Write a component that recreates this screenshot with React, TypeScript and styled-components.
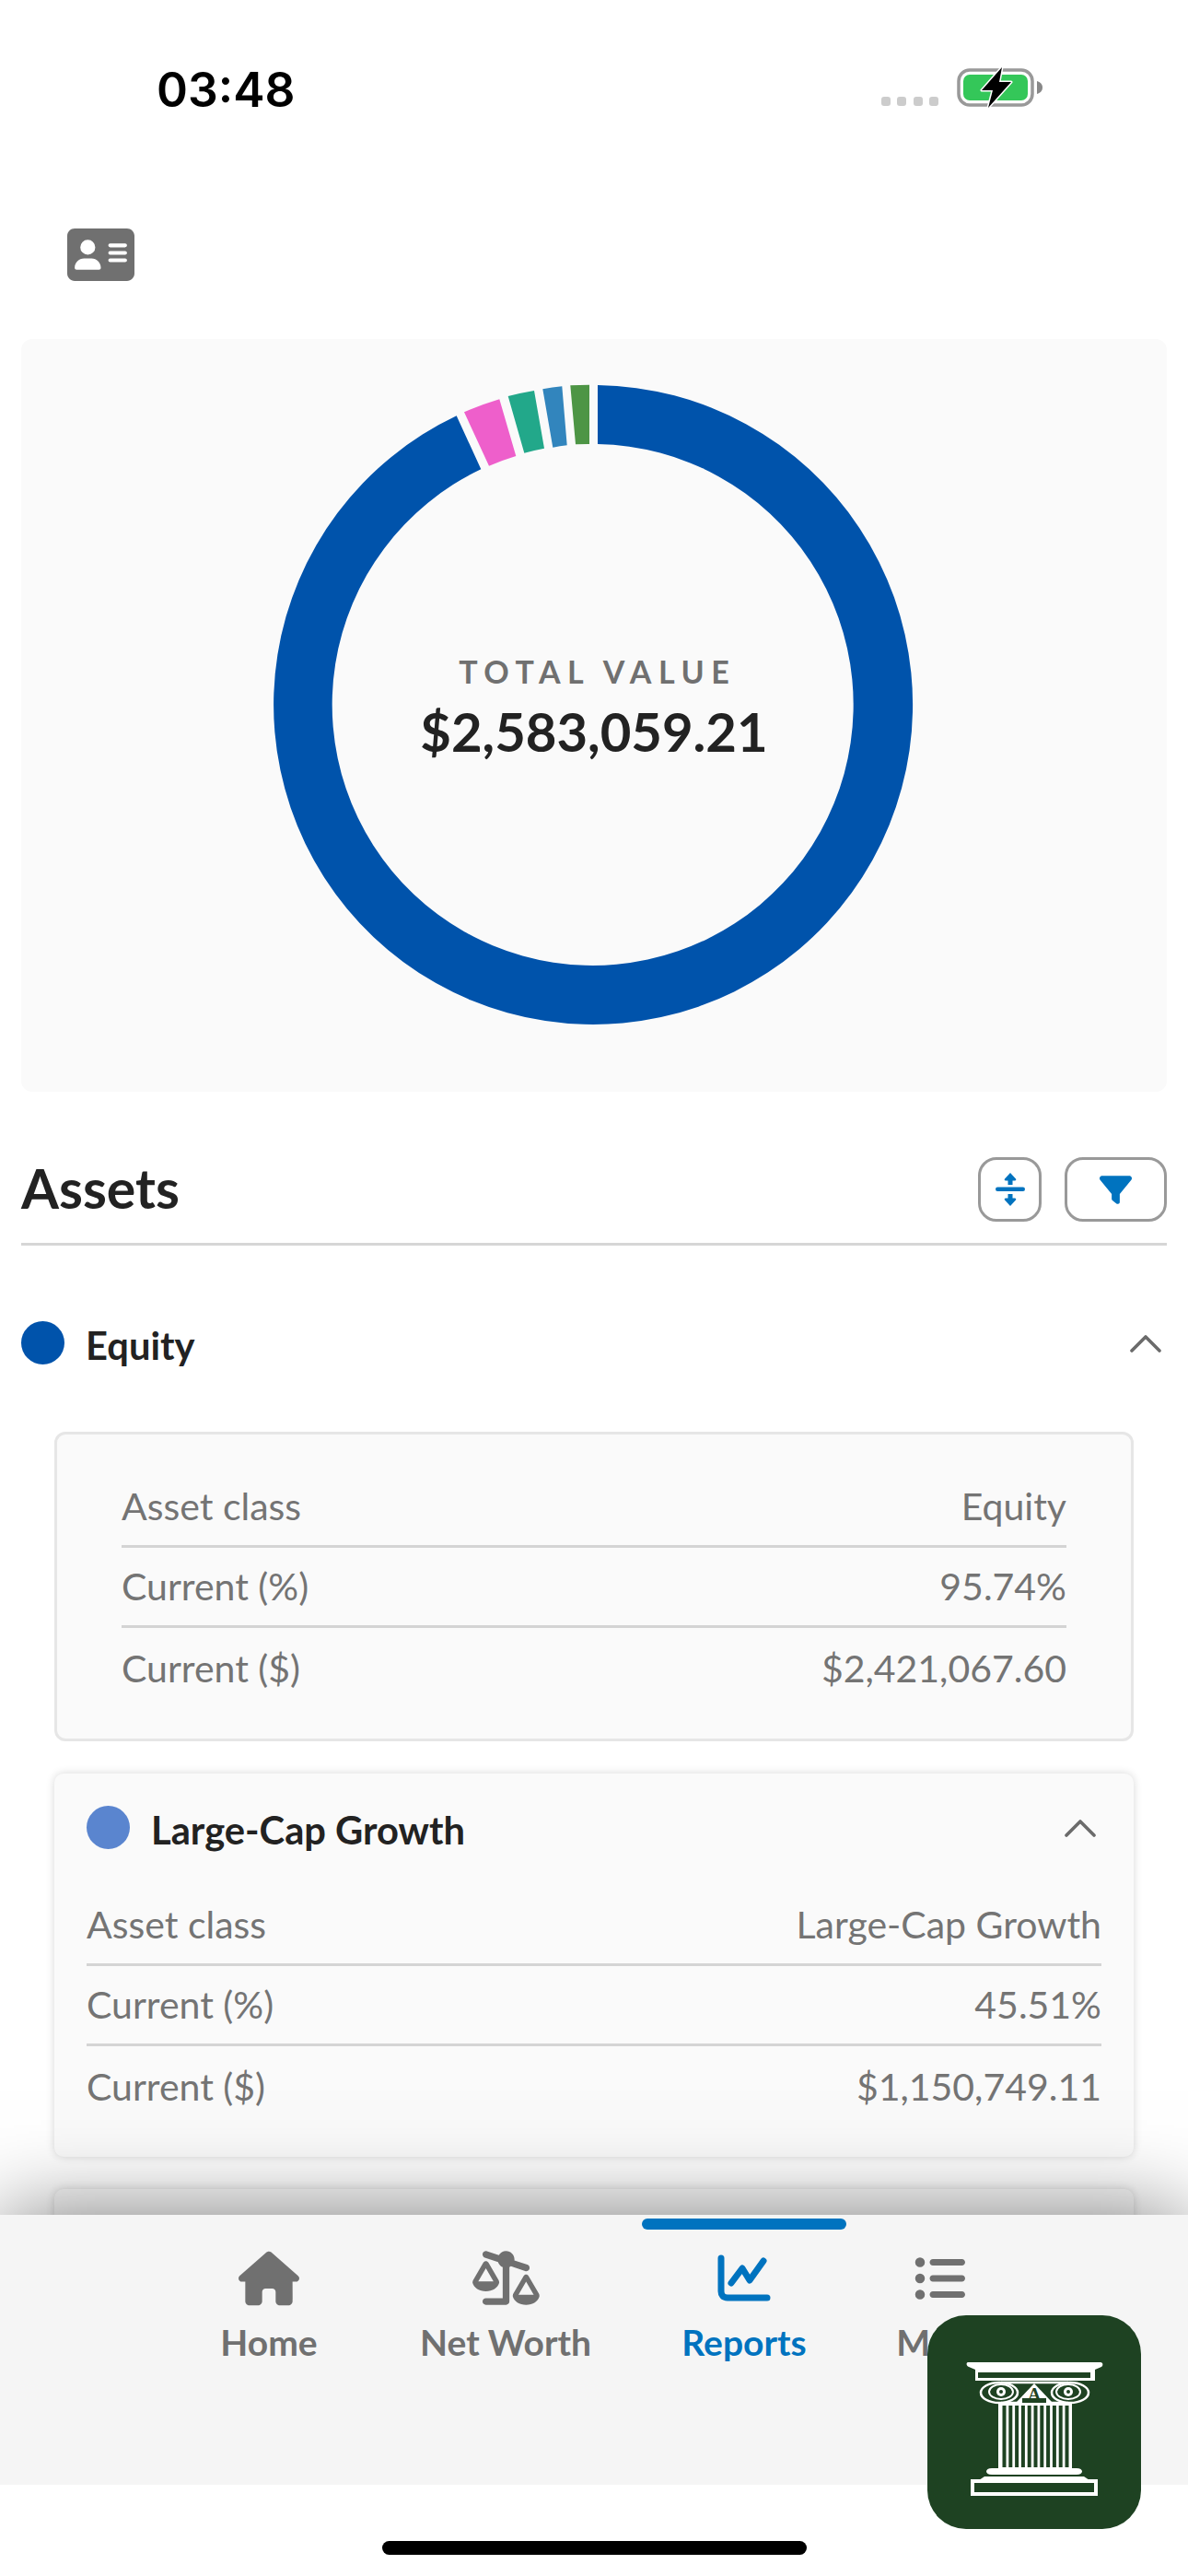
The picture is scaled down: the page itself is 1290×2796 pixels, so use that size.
import React from 'react';
import styled, { createGlobalStyle } from 'styled-components';
import { FaAddressCard, FaFilter, FaHouse, FaListUl, FaScaleUnbalancedFlip } from 'react-icons/fa6';

const GlobalStyle = createGlobalStyle`
    html, body {
        margin: 0;
        padding: 0;
        background: #fff;
    }
`;

const grey = '#707070';
const accent = '#0073bf';
const ink = '#222222';
const logoGreen = '#1e4222';

const flutes = [0, 1, 2, 3, 4, 5, 6, 7, 8, 9, 10];

const Battery = () => (
    <svg width="94" height="44" viewBox="0 0 94 44">
        <rect x="2" y="3" width="80" height="38" rx="12" fill="none" stroke="#999" strokeWidth="3.5" />
        <rect x="7" y="8" width="70" height="28" rx="7" fill="#34c759" />
        <path d="M87 15c3.500 1 6 3.500 6 7s-2.500 6-6 7z" fill="#888" />
        <path
            d="M49 0 27 25h12l-5 19 25-28H46z"
            fill="#000"
            stroke="#fff"
            strokeWidth="3"
            paintOrder="stroke"
            strokeLinejoin="round"
        />
    </svg>
);

const Donut = () => (
    <svg width="694" height="694" viewBox="298 417 694 694" overflow="visible">
        <path d="M649 418 A347 347 0 1 1 495.700 451.300 L522.300 509.300 A283 283 0 1 0 649 482 Z" fill="#0053ab" />
        <path d="M504 447.300 A347 347 0 0 1 542.300 433.300 L560.300 495 A283 283 0 0 0 531 505.700 Z" fill="#ee5fcb" />
        <path d="M551.700 430 A347 347 0 0 1 580 424 L591 486.700 A283 283 0 0 0 569.300 491.700 Z" fill="#22a88a" />
        <path d="M589.300 422.300 A347 347 0 0 1 610.300 419.300 L615.700 483.300 A283 283 0 0 0 600.300 485.700 Z" fill="#3285bd" />
        <path d="M619.300 418.300 A347 347 0 0 1 640 417.700 L640 482 A283 283 0 0 0 625 482.300 Z" fill="#4d9545" />
    </svg>
);

const Chevron = () => (
    <svg width="34" height="20" viewBox="0 0 34 20">
        <path d="M2 18 17 3l15 15" fill="none" stroke="#6b6b6b" strokeWidth="3.600" strokeLinecap="round" strokeLinejoin="round" />
    </svg>
);

const ExpandIcon = () => (
    <svg width="32" height="36" viewBox="0 0 32 36" fill={accent}>
        <rect x="0" y="15.500" width="32" height="4.500" rx="2.200" />
        <path d="M16 0l6 6.500c.7 1 .1 2-1 2h-2.500V13h-5V8.500H11c-1.100 0-1.700-1-1-2z" />
        <path d="M16 36l6-6.500c.7-1 .1-2-1-2h-2.500V23h-5v4.500H11c-1.100 0-1.700 1-1 2z" />
    </svg>
);

const ChartIcon = () => (
    <svg width="58" height="51" viewBox="0 0 58 51" fill="none" stroke={accent} strokeWidth="7" strokeLinecap="round" strokeLinejoin="round">
        <path d="M4 4v36c0 4 2 7 7 7h43" />
        <path d="M15 31 27 15l8 13 15-21" />
    </svg>
);

const ColumnLogo = () => (
    <svg width="232" height="232" viewBox="0 0 232 232">
        <path d="M44 51h144c3 0 3 4 1 5l-7 3v12H52V59l-7-3c-3-1-3-5-1-5z" fill="#fff" />
        <rect x="55" y="62" width="122" height="6" fill={logoGreen} />
        <g fill="none" stroke="#fff">
            <ellipse cx="78" cy="84" rx="20" ry="11" strokeWidth="2.500" />
            <ellipse cx="155" cy="84" rx="20" ry="11" strokeWidth="2.500" />
            <ellipse cx="80" cy="83" rx="13" ry="8" strokeWidth="2" />
            <ellipse cx="153" cy="83" rx="13" ry="8" strokeWidth="2" />
            <path d="M80 73h73M80 95h73" strokeWidth="2.500" />
        </g>
        <circle cx="80" cy="83" r="5" fill="#fff" />
        <circle cx="153" cy="83" r="5" fill="#fff" />
        <circle cx="80" cy="83" r="2" fill={logoGreen} />
        <circle cx="153" cy="83" r="2" fill={logoGreen} />
        <path d="M116 74 97 94h38z" fill="#fff" />
        <LogoLetter x="116" y="92" textAnchor="middle">A</LogoLetter>
        <rect x="103" y="90" width="26" height="5" fill={logoGreen} />
        <rect x="77" y="96" width="80" height="71" fill="#fff" />
        {flutes.map((n) => (
            <rect key={n} x={81.500 + n * 6.800} y="98" width="4" height="67" fill={logoGreen} />
        ))}
        <path d="M70 166h92c8 0 8 7 0 7H70c-8 0-8-7 0-7z" fill="#fff" />
        <path d="M62 175h108l6 4H56z" fill="#fff" />
        <rect x="49" y="180" width="134" height="14" fill={logoGreen} stroke="#fff" strokeWidth="4" />
    </svg>
);

const rows = (cls: string, pct: string, usd: string) => [
    { label: 'Asset class', value: cls },
    { label: 'Current (%)', value: pct },
    { label: 'Current ($)', value: usd },
];

const Rows: React.FC<{ data: { label: string; value: string }[] }> = ({ data }) => (
    <>
        {data.map((r) => (
            <DetailRow key={r.label}>
                <span>{r.label}</span>
                <span>{r.value}</span>
            </DetailRow>
        ))}
    </>
);

export default function App() {
    return (
        <Page>
            <GlobalStyle />
            <StatusBar>
                <Clock>03:48</Clock>
                <StatusRight>
                    <Signal>
                        <i />
                        <i />
                        <i />
                        <i />
                    </Signal>
                    <Battery />
                </StatusRight>
            </StatusBar>
            <Content>
                <TopRow>
                    <FaAddressCard size={73} color={grey} />
                </TopRow>
                <ChartPanel>
                    <DonutWrap>
                        <Donut />
                        <DonutLabel>
                            <TotalCaption>TOTAL VALUE</TotalCaption>
                            <TotalAmount>$2,583,059.21</TotalAmount>
                        </DonutLabel>
                    </DonutWrap>
                </ChartPanel>
                <AssetsHeader>
                    <AssetsTitle>Assets</AssetsTitle>
                    <HeaderActions>
                        <IconButton $width={69}>
                            <ExpandIcon />
                        </IconButton>
                        <IconButton $width={111}>
                            <FaFilter size={35} color={accent} />
                        </IconButton>
                    </HeaderActions>
                </AssetsHeader>
                <EquityHeader>
                    <HeaderLeft>
                        <Dot $color="#0053ab" />
                        <GroupName>Equity</GroupName>
                    </HeaderLeft>
                    <Chevron />
                </EquityHeader>
                <SummaryCard>
                    <Rows data={rows('Equity', '95.74%', '$2,421,067.60')} />
                </SummaryCard>
                <SubCard>
                    <SubHeader>
                        <HeaderLeft>
                            <Dot $color="#5a85cf" />
                            <GroupName>Large-Cap Growth</GroupName>
                        </HeaderLeft>
                        <Chevron />
                    </SubHeader>
                    <Rows data={rows('Large-Cap Growth', '45.51%', '$1,150,749.11')} />
                </SubCard>
                <NextCard />
            </Content>
            <TabBar>
                <Tab>
                    <TabMarker />
                    <TabIcon>
                        <FaHouse size={66} color={grey} />
                    </TabIcon>
                    <TabLabel>Home</TabLabel>
                </Tab>
                <Tab>
                    <TabMarker />
                    <TabIcon>
                        <FaScaleUnbalancedFlip size={73} color={grey} />
                    </TabIcon>
                    <TabLabel>Net Worth</TabLabel>
                </Tab>
                <Tab>
                    <TabMarker $active />
                    <TabIcon>
                        <ChartIcon />
                    </TabIcon>
                    <TabLabel $active>Reports</TabLabel>
                </Tab>
                <Tab>
                    <TabMarker />
                    <TabIcon>
                        <FaListUl size={56} color={grey} />
                    </TabIcon>
                    <TabLabel>More</TabLabel>
                </Tab>
            </TabBar>
            <BottomArea>
                <HomeIndicator />
            </BottomArea>
            <LogoBadge>
                <ColumnLogo />
            </LogoBadge>
        </Page>
    );
}

const Page = styled.div`
    position: relative;
    width: 1290px;
    height: 2796px;
    display: flex;
    flex-direction: column;
    overflow: hidden;
    background: #fff;
    font-family: Lato, 'Noto Sans', sans-serif;
`;

const StatusBar = styled.div`
    flex: 0 0 140px;
    box-sizing: border-box;
    padding: 73px 157px 0 170px;
    display: flex;
    justify-content: space-between;
    align-items: flex-start;
`;

const Clock = styled.div`
    font-family: Inter, sans-serif;
    font-weight: 600;
    font-size: 51.500px;
    line-height: 48px;
    color: #000;
`;

const StatusRight = styled.div`
    display: flex;
    align-items: flex-end;
    gap: 20px;
`;

const Signal = styled.div`
    display: flex;
    gap: 7.500px;
    margin-bottom: 2px;

    i {
        display: block;
        width: 10px;
        height: 10px;
        border-radius: 3px;
        background: #cccccc;
    }
`;

const Content = styled.div`
    flex: 1;
    min-height: 0;
    overflow: hidden;
`;

const TopRow = styled.div`
    height: 228px;
    box-sizing: border-box;
    padding: 100px 0 0 73px;
`;

const ChartPanel = styled.div`
    margin: 0 23px;
    height: 817px;
    box-sizing: border-box;
    padding-top: 49px;
    display: flex;
    justify-content: center;
    align-items: flex-start;
    background: #fafafa;
    border-radius: 12px;
`;

const DonutWrap = styled.div`
    position: relative;
    width: 694px;
    height: 694px;
`;

const DonutLabel = styled.div`
    position: absolute;
    inset: 0;
    padding-top: 12px;
    display: flex;
    flex-direction: column;
    align-items: center;
    justify-content: center;
`;

const TotalCaption = styled.div`
    padding-left: 7.500px;
    font-size: 34px;
    line-height: 38px;
    letter-spacing: 7.500px;
    font-weight: 700;
    color: ${grey};
`;

const TotalAmount = styled.div`
    margin-top: 10px;
    font-size: 58px;
    line-height: 72px;
    font-weight: 700;
    color: ${ink};
`;

const AssetsHeader = styled.div`
    margin: 0 23px;
    height: 167px;
    box-sizing: border-box;
    padding-top: 71px;
    display: flex;
    justify-content: space-between;
    align-items: flex-start;
    border-bottom: 3px solid #d6d6d6;
`;

const AssetsTitle = styled.div`
    font-size: 59px;
    line-height: 68px;
    font-weight: 700;
    color: ${ink};
`;

const HeaderActions = styled.div`
    display: flex;
    gap: 25px;
`;

const IconButton = styled.div<{ $width: number }>`
    width: ${(p) => p.$width}px;
    height: 70px;
    box-sizing: border-box;
    display: flex;
    align-items: center;
    justify-content: center;
    border: 3px solid #999999;
    border-radius: 20px;
    background: #fff;
`;

const EquityHeader = styled.div`
    margin: 82px 29px 0 23px;
    height: 47px;
    display: flex;
    justify-content: space-between;
    align-items: center;
`;

const HeaderLeft = styled.div`
    display: flex;
    align-items: center;
    gap: 23px;
`;

const Dot = styled.div<{ $color: string }>`
    width: 47px;
    height: 47px;
    border-radius: 50%;
    background: ${(p) => p.$color};
`;

const GroupName = styled.div`
    padding-top: 5px;
    font-size: 41.700px;
    line-height: 47px;
    font-weight: 700;
    color: ${ink};
`;

const SummaryCard = styled.div`
    margin: 73px 59px 0;
    height: 336px;
    box-sizing: border-box;
    padding: 35px 70px 0;
    background: #fafafa;
    border: 3px solid #e6e6e6;
    border-radius: 12px;
`;

const SubCard = styled.div`
    margin: 35px 59px 0;
    height: 416px;
    box-sizing: border-box;
    padding: 35px 35px 0;
    background: #fafafa;
    border-radius: 10px;
    box-shadow: 0 0 10px rgba(0, 0, 0, 0.16);
`;

const SubHeader = styled.div`
    height: 47px;
    padding-right: 6px;
    margin-bottom: 39px;
    display: flex;
    justify-content: space-between;
    align-items: center;
`;

const NextCard = styled(SubCard)`
    margin-top: 35px;
`;

const DetailRow = styled.div`
    height: 87.500px;
    box-sizing: border-box;
    display: flex;
    justify-content: space-between;
    align-items: center;
    font-size: 41px;
    font-weight: 400;
    color: #747474;
    border-bottom: 3px solid #d4d4d4;

    &:last-child {
        border-bottom: none;
    }
`;

const TabBar = styled.div`
    position: relative;
    flex: 0 0 293px;
    box-sizing: border-box;
    padding: 4px 0 0 180px;
    display: grid;
    grid-template-columns: 224px 290px 228px 196px;
    align-items: start;
    background: #f5f5f5;
    box-shadow: 0 0 90px rgba(0, 0, 0, 0.5);
`;

const Tab = styled.div`
    display: flex;
    flex-direction: column;
    align-items: center;
`;

const TabMarker = styled.div<{ $active?: boolean }>`
    width: 222px;
    height: 12px;
    border-radius: 6px;
    background: ${(p) => (p.$active ? accent : 'transparent')};
`;

const TabIcon = styled.div`
    margin-top: 23px;
    height: 59px;
    display: flex;
    align-items: center;
    justify-content: center;
`;

const TabLabel = styled.div<{ $active?: boolean }>`
    margin-top: 18px;
    font-size: 39px;
    line-height: 44px;
    font-weight: 700;
    color: ${(p) => (p.$active ? accent : grey)};
`;

const BottomArea = styled.div`
    position: relative;
    flex: 0 0 99px;
    box-sizing: border-box;
    padding-top: 61px;
    display: flex;
    justify-content: center;
    align-items: flex-start;
    background: #fff;
`;

const HomeIndicator = styled.div`
    width: 461px;
    height: 15px;
    border-radius: 8px;
    background: #000;
`;

const LogoBadge = styled.div`
    position: absolute;
    right: 51px;
    bottom: 51px;
    width: 232px;
    height: 232px;
    border-radius: 42px;
    overflow: hidden;
    background: ${logoGreen};
`;

const LogoLetter = styled.text`
    font-family: 'Liberation Serif', serif;
    font-weight: 700;
    font-size: 19px;
    fill: ${logoGreen};
`;
